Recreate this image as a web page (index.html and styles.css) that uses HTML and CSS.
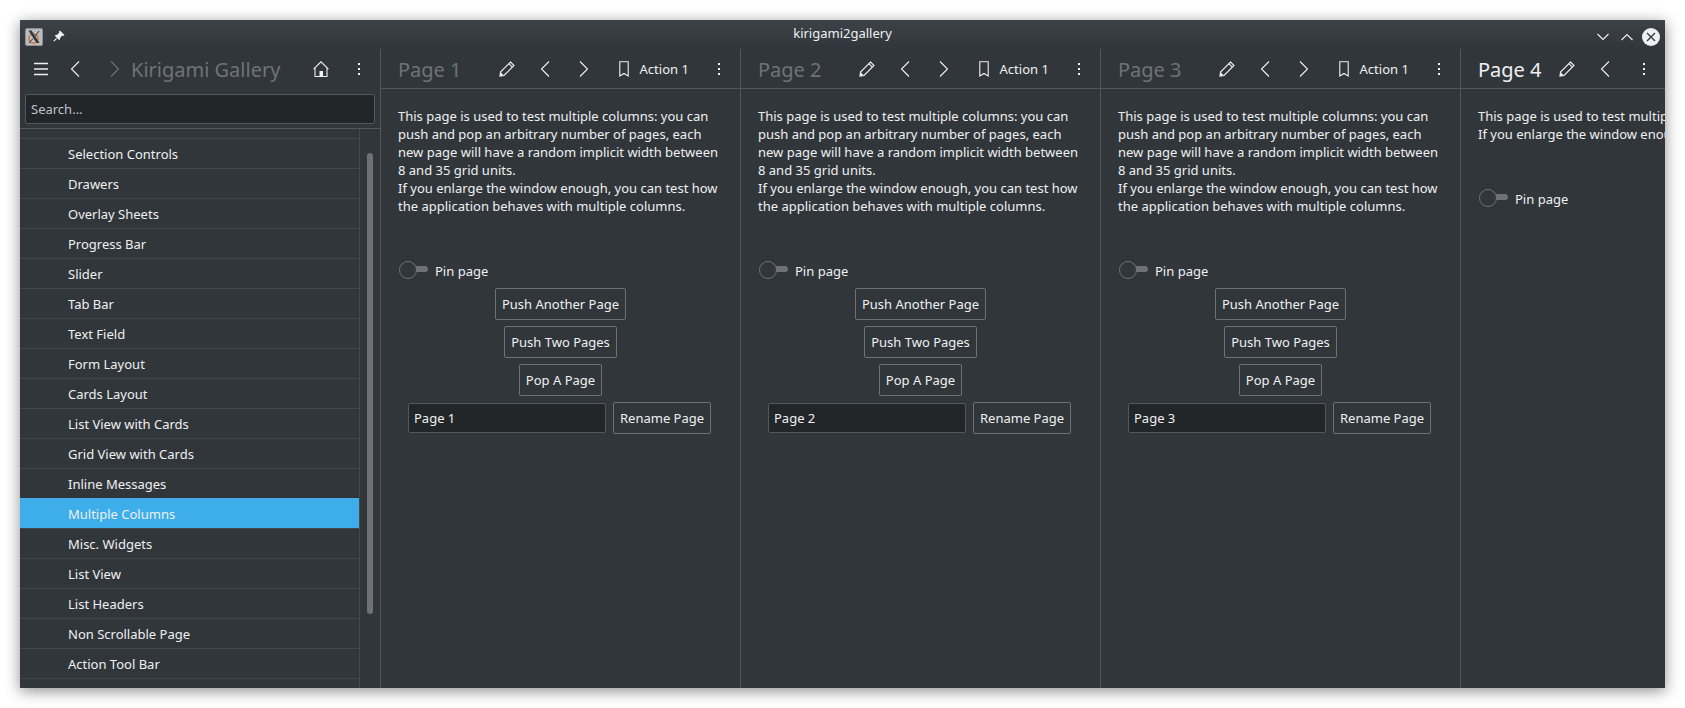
FILE: index.html

```html
<!DOCTYPE html>
<html lang="en">
<head>
  <meta charset="UTF-8" />
  <title>kirigami2gallery</title>
  <link rel="stylesheet" href="styles.css">
</head>
<body>

<div class="window">

  <!-- Title bar -->
  <div class="titlebar">
    <div class="tb-left">
      <svg class="app-icon" width="18" height="18" viewBox="0 0 18 18">
        <rect x="0.5" y="0.5" width="17" height="17" rx="1.5" fill="#b9bdbf" stroke="#8d9193"/>
        <circle cx="8.5" cy="10.5" r="4.6" fill="none" stroke="#d9692f" stroke-width="1.3"/>
        <path d="M3.5 2.5 L6.5 2.5 L14.5 15 L11.5 15 Z" fill="#33373a"/>
        <path d="M14 3 L10 8.5 M8 10.5 L4 15" stroke="#33373a" stroke-width="1" fill="none"/>
      </svg>
      <svg class="pin-icon" width="12" height="12" viewBox="0 0 12 12">
        <path d="M7 0.5 L11.5 5 L10.4 6 L9.4 5.6 L7.2 7.8 L7 9.6 L6 10 L2 6 L2.4 5 L4.2 4.8 L6.4 2.6 L6 1.6 Z" fill="#eff0f1"/>
        <path d="M3.6 8.4 L0.8 11.2" stroke="#eff0f1" stroke-width="1.2"/>
      </svg>
    </div>
    <div class="tb-title">kirigami2gallery</div>
    <div class="tb-right">
      <svg width="12" height="8" viewBox="0 0 12 8"><path d="M0.5 1 L6 6.5 L11.5 1" class="line"/></svg>
      <svg width="12" height="8" viewBox="0 0 12 8"><path d="M0.5 7 L6 1.5 L11.5 7" class="line"/></svg>
      <svg width="18" height="18" viewBox="0 0 18 18">
        <circle cx="9" cy="9" r="9" fill="#eff0f1"/>
        <path d="M5 5 L13 13 M13 5 L5 13" stroke="#31363b" stroke-width="1.3"/>
      </svg>
    </div>
  </div>

  <div class="columns">

    <!-- Global drawer -->
    <div class="sidebar">
      <div class="header side-header">
        <svg class="menu-icon" width="16" height="14" viewBox="0 0 16 14"><path d="M1 1.5 H15 M1 7 H15 M1 12.5 H15" stroke="#eff0f1" stroke-width="1.4"/></svg>
        <svg class="chev nav-back" width="10" height="16" viewBox="0 0 10 16"><path d="M9 0.5 L1.5 8 L9 15.5" class="line"/></svg>
        <svg class="chev nav-fwd" width="10" height="16" viewBox="0 0 10 16"><path d="M1 0.5 L8.5 8 L1 15.5" class="line dim"/></svg>
        <span class="title side-title">Kirigami Gallery</span>
        <svg class="home-icon" width="16" height="16" viewBox="0 0 16 16">
          <path d="M0.6 8.2 L8 0.8 L15.4 8.2" class="line"/>
          <path d="M2 7 V15.5 H14 V7" class="line"/>
          <rect x="6.5" y="10" width="3.5" height="5.5" fill="#eff0f1"/>
        </svg>
        <svg class="dots side-dots" width="4" height="14" viewBox="0 0 4 14"><path d="M1 1 h2 v2 h-2z M1 6 h2 v2 h-2z M1 11 h2 v2 h-2z" fill="#eff0f1"/></svg>
      </div>
      <div class="search-wrap">
        <div class="field search">Search...</div>
      </div>
      <div class="list-wrap">
        <ul class="list">
          <li>Selection Controls</li>
          <li>Drawers</li>
          <li>Overlay Sheets</li>
          <li>Progress Bar</li>
          <li>Slider</li>
          <li>Tab Bar</li>
          <li>Text Field</li>
          <li>Form Layout</li>
          <li>Cards Layout</li>
          <li>List View with Cards</li>
          <li>Grid View with Cards</li>
          <li>Inline Messages</li>
          <li class="selected">Multiple Columns</li>
          <li>Misc. Widgets</li>
          <li>List View</li>
          <li>List Headers</li>
          <li>Non Scrollable Page</li>
          <li>Action Tool Bar</li>
        </ul>
        <div class="scrolltrack"><div class="thumb"></div></div>
      </div>
    </div>

    <!-- Page 1 -->
    <div class="page">
      <div class="header">
        <span class="title">Page 1</span>
        <svg class="pencil" width="16" height="16" viewBox="0 0 16 16"><path d="M11.5 1 L15 4.5 L5 14.5 L1 15 L1.5 11 Z M9.8 2.7 L13.3 6.2" class="line"/><path d="M1.5 11 L5 14.5 L1 15 Z" fill="#eff0f1"/></svg>
        <svg class="chev act-back" width="10" height="16" viewBox="0 0 10 16"><path d="M9 0.5 L1.5 8 L9 15.5" class="line"/></svg>
        <svg class="chev act-fwd" width="10" height="16" viewBox="0 0 10 16"><path d="M1 0.5 L8.5 8 L1 15.5" class="line"/></svg>
        <svg class="bookmark" width="10" height="16" viewBox="0 0 10 16"><path d="M0.8 0.8 H9.2 V15 L5 12.5 L0.8 15 Z" class="line"/></svg>
        <span class="action">Action 1</span>
        <svg class="dots" width="4" height="14" viewBox="0 0 4 14"><path d="M1 1 h2 v2 h-2z M1 6 h2 v2 h-2z M1 11 h2 v2 h-2z" fill="#eff0f1"/></svg>
      </div>
      <div class="content">
        <p class="desc">This page is used to test multiple columns: you can push and pop an arbitrary number of pages, each new page will have a random implicit width between 8 and 35 grid units.<br>If you enlarge the window enough, you can test how the application behaves with multiple columns.</p>
        <div class="switch-row"><span class="switch"><span class="knob"></span></span>Pin page</div>
        <div class="btn-row"><span class="btn">Push Another Page</span></div>
        <div class="btn-row"><span class="btn">Push Two Pages</span></div>
        <div class="btn-row"><span class="btn">Pop A Page</span></div>
        <div class="rename-row"><div class="field rename">Page 1</div><span class="btn">Rename Page</span></div>
      </div>
    </div>

    <!-- Page 2 -->
    <div class="page">
      <div class="header">
        <span class="title">Page 2</span>
        <svg class="pencil" width="16" height="16" viewBox="0 0 16 16"><path d="M11.5 1 L15 4.5 L5 14.5 L1 15 L1.5 11 Z M9.8 2.7 L13.3 6.2" class="line"/><path d="M1.5 11 L5 14.5 L1 15 Z" fill="#eff0f1"/></svg>
        <svg class="chev act-back" width="10" height="16" viewBox="0 0 10 16"><path d="M9 0.5 L1.5 8 L9 15.5" class="line"/></svg>
        <svg class="chev act-fwd" width="10" height="16" viewBox="0 0 10 16"><path d="M1 0.5 L8.5 8 L1 15.5" class="line"/></svg>
        <svg class="bookmark" width="10" height="16" viewBox="0 0 10 16"><path d="M0.8 0.8 H9.2 V15 L5 12.5 L0.8 15 Z" class="line"/></svg>
        <span class="action">Action 1</span>
        <svg class="dots" width="4" height="14" viewBox="0 0 4 14"><path d="M1 1 h2 v2 h-2z M1 6 h2 v2 h-2z M1 11 h2 v2 h-2z" fill="#eff0f1"/></svg>
      </div>
      <div class="content">
        <p class="desc">This page is used to test multiple columns: you can push and pop an arbitrary number of pages, each new page will have a random implicit width between 8 and 35 grid units.<br>If you enlarge the window enough, you can test how the application behaves with multiple columns.</p>
        <div class="switch-row"><span class="switch"><span class="knob"></span></span>Pin page</div>
        <div class="btn-row"><span class="btn">Push Another Page</span></div>
        <div class="btn-row"><span class="btn">Push Two Pages</span></div>
        <div class="btn-row"><span class="btn">Pop A Page</span></div>
        <div class="rename-row"><div class="field rename">Page 2</div><span class="btn">Rename Page</span></div>
      </div>
    </div>

    <!-- Page 3 -->
    <div class="page">
      <div class="header">
        <span class="title">Page 3</span>
        <svg class="pencil" width="16" height="16" viewBox="0 0 16 16"><path d="M11.5 1 L15 4.5 L5 14.5 L1 15 L1.5 11 Z M9.8 2.7 L13.3 6.2" class="line"/><path d="M1.5 11 L5 14.5 L1 15 Z" fill="#eff0f1"/></svg>
        <svg class="chev act-back" width="10" height="16" viewBox="0 0 10 16"><path d="M9 0.5 L1.5 8 L9 15.5" class="line"/></svg>
        <svg class="chev act-fwd" width="10" height="16" viewBox="0 0 10 16"><path d="M1 0.5 L8.5 8 L1 15.5" class="line"/></svg>
        <svg class="bookmark" width="10" height="16" viewBox="0 0 10 16"><path d="M0.8 0.8 H9.2 V15 L5 12.5 L0.8 15 Z" class="line"/></svg>
        <span class="action">Action 1</span>
        <svg class="dots" width="4" height="14" viewBox="0 0 4 14"><path d="M1 1 h2 v2 h-2z M1 6 h2 v2 h-2z M1 11 h2 v2 h-2z" fill="#eff0f1"/></svg>
      </div>
      <div class="content">
        <p class="desc">This page is used to test multiple columns: you can push and pop an arbitrary number of pages, each new page will have a random implicit width between 8 and 35 grid units.<br>If you enlarge the window enough, you can test how the application behaves with multiple columns.</p>
        <div class="switch-row"><span class="switch"><span class="knob"></span></span>Pin page</div>
        <div class="btn-row"><span class="btn">Push Another Page</span></div>
        <div class="btn-row"><span class="btn">Push Two Pages</span></div>
        <div class="btn-row"><span class="btn">Pop A Page</span></div>
        <div class="rename-row"><div class="field rename">Page 3</div><span class="btn">Rename Page</span></div>
      </div>
    </div>

    <!-- Page 4 is cut off by the window edge -->
    <div class="page last-page">
      <div class="header">
        <span class="title current">Page 4</span>
        <svg class="pencil pencil-4" width="16" height="16" viewBox="0 0 16 16"><path d="M11.5 1 L15 4.5 L5 14.5 L1 15 L1.5 11 Z M9.8 2.7 L13.3 6.2" class="line"/><path d="M1.5 11 L5 14.5 L1 15 Z" fill="#eff0f1"/></svg>
        <svg class="chev back-4" width="10" height="16" viewBox="0 0 10 16"><path d="M9 0.5 L1.5 8 L9 15.5" class="line"/></svg>
        <svg class="dots dots-4" width="4" height="14" viewBox="0 0 4 14"><path d="M1 1 h2 v2 h-2z M1 6 h2 v2 h-2z M1 11 h2 v2 h-2z" fill="#eff0f1"/></svg>
      </div>
      <div class="content">
        <p class="desc wide">This page is used to test multiple columns: you can push and pop an arbitrary number of pages, each new page<br>If you enlarge the window enough, you can test how the application behaves with multiple columns.</p>
        <div class="switch-row"><span class="switch"><span class="knob"></span></span>Pin page</div>
      </div>
    </div>

  </div>
</div>

</body>
</html>
```

FILE: styles.css

```css
* {
  margin: 0;
  padding: 0;
  box-sizing: border-box;
}

html, body {
  height: 100%;
  background: #fff;
  overflow: hidden;
}

body {
  padding: 20px;
  font-family: "Noto Sans", sans-serif;
  font-size: 13px;
  color: #eff0f1;
}

.line {
  fill: none;
  stroke: #eff0f1;
  stroke-width: 1.1;
}

.line.dim {
  stroke: #6e7377;
}

.window {
  width: 1645px;
  height: 668px;
  background: #31363b;
  box-shadow: 0 3px 14px rgba(0, 0, 0, 0.45);
  display: flex;
  flex-direction: column;
  overflow: hidden;
}

/* title bar */
.titlebar {
  height: 29px;
  flex: none;
  display: flex;
  align-items: center;
  justify-content: space-between;
  padding: 5px 5px 0;
  background: linear-gradient(to bottom, #3d4249, #31363b);
  position: relative;
}

.tb-left, .tb-right {
  display: flex;
  align-items: center;
}

.pin-icon {
  margin-left: 10px;
  margin-top: -2px;
}

.tb-title {
  position: absolute;
  left: 0;
  right: 0;
  top: 4px;
  text-align: center;
  line-height: 18px;
}

.tb-right svg {
  margin-left: 12px;
}

.tb-right svg:last-child {
  margin-left: 9px;
}

.columns {
  flex: 1;
  display: flex;
  min-height: 0;
}

/* shared header */
.header {
  height: 40px;
  flex: none;
  display: flex;
  align-items: center;
  border-bottom: 1px solid #53585c;
}

.title {
  font-size: 20px;
  color: #6e7377;
  line-height: 28px;
  margin-top: 2px;
}

.title.current {
  color: #eff0f1;
}

/* sidebar */
.sidebar {
  width: 361px;
  flex: none;
  display: flex;
  flex-direction: column;
  border-right: 1px solid #53585c;
}

.side-header {
  border-bottom: none;
  height: 39px;
}

.menu-icon { margin-left: 13px; }
.nav-back { margin-left: 21px; }
.nav-fwd { margin-left: 30px; }
.side-title { margin-left: 11px; }
.home-icon { margin-left: 33px; }
.side-dots { margin-left: 27px; }

.search-wrap {
  padding: 6px 5px 4px;
  border-bottom: 1px solid #53585c;
}

.field {
  background: #232629;
  border: 1px solid #53585c;
  border-radius: 2px;
  height: 30px;
  line-height: 28px;
  padding-left: 5px;
}

.search {
  color: #bdc3c7;
}

.list-wrap {
  flex: 1;
  display: flex;
  min-height: 0;
  overflow: hidden;
}

.list {
  list-style: none;
  width: 340px;
  flex: none;
  padding-top: 9px;
  border-right: 1px solid #43484c;
  height: 100%;
}

.list li {
  height: 30px;
  line-height: 30px;
  padding-left: 48px;
  border-top: 1px solid #43484c;
}

.list li:last-child {
  border-bottom: 1px solid #43484c;
  height: 31px;
}

.list li.selected {
  background: #3daee9;
  border-top-color: #3daee9;
}

.scrolltrack {
  flex: 1;
  padding: 24px 7px 0 7px;
}

.thumb {
  height: 461px;
  background: #6e7276;
  border-radius: 3px;
}

/* pages */
.page {
  width: 360px;
  flex: none;
  display: flex;
  flex-direction: column;
  border-right: 1px solid #53585c;
}

.last-page {
  border-right: none;
  flex: 1;
  width: auto;
  min-width: 0;
  overflow: hidden;
}

.page .header {
  padding-left: 17px;
}

.pencil { margin-left: 37px; }
.act-back { margin-left: 25px; }
.act-fwd { margin-left: 29px; }
.bookmark { margin-left: 30px; }
.action { margin-left: 11px; line-height: 18px; }
.dots { margin-left: 28px; }

.pencil-4 { margin-left: 17px; }
.back-4 { margin-left: 25px; }
.dots-4 { margin-left: 32px; }

.content {
  padding: 18px 16px 0 17px;
}

.desc {
  line-height: 18px;
  height: 153px;
}

.desc.wide {
  white-space: nowrap;
  height: 81px;
}

.switch-row {
  display: flex;
  align-items: center;
  height: 20px;
  line-height: 20px;
  margin-bottom: 8px;
  padding-top: 2px;
}

.switch {
  width: 29px;
  height: 18px;
  display: block;
  position: relative;
  margin-right: 7px;
  margin-left: 1px;
  margin-top: -2px;
}

.switch::before {
  content: "";
  position: absolute;
  left: 12px;
  top: 5px;
  width: 17px;
  height: 6px;
  border-radius: 3px;
  background: #6e7276;
}

.knob {
  position: absolute;
  left: 0;
  top: 0;
  width: 18px;
  height: 18px;
  border-radius: 50%;
  border: 1px solid #6e7276;
  background: #31363b;
}

.btn-row {
  display: flex;
  justify-content: center;
  margin-bottom: 6px;
  padding-right: 1px;
}

.btn {
  display: inline-block;
  height: 32px;
  line-height: 30px;
  padding: 0 6px;
  border: 1px solid #6e7276;
  border-radius: 2px;
  white-space: nowrap;
}

.rename-row {
  display: flex;
  align-items: center;
  gap: 7px;
  padding-left: 10px;
}

.rename {
  width: 198px;
  height: 30px;
}
```
